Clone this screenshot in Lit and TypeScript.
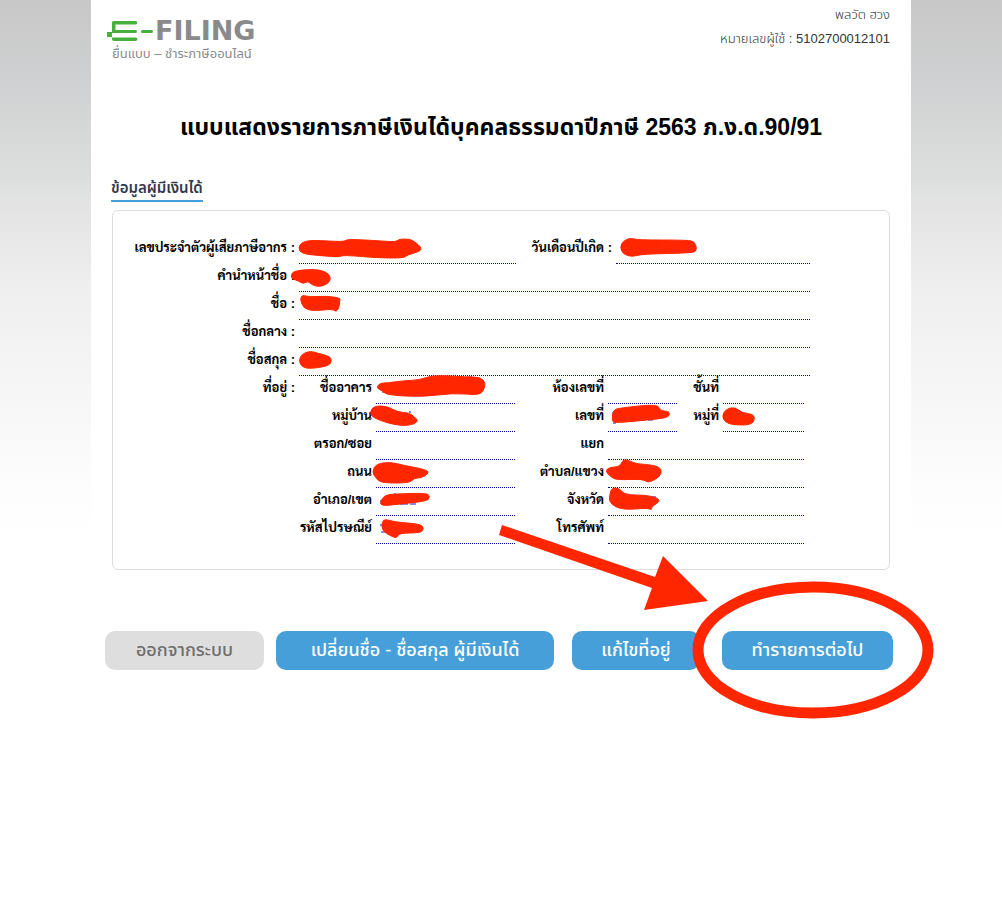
import { LitElement, html, svg, css, nothing } from "lit";
import { customElement } from "lit/decorators.js";

interface Field {
  id: string;
  label: string;
  area: string;
}

const personal: Field[][] = [
  [
    { id: "tax-id", label: "เลขประจำตัวผู้เสียภาษีอากร :", area: "short" },
    { id: "birth", label: "วันเดือนปีเกิด :", area: "short" },
  ],
  [{ id: "title", label: "คำนำหน้าชื่อ :", area: "full" }],
  [{ id: "first", label: "ชื่อ :", area: "full" }],
  [{ id: "middle", label: "ชื่อกลาง :", area: "full" }],
  [{ id: "last", label: "ชื่อสกุล :", area: "full" }],
];

const address: Field[][] = [
  [
    { id: "building", label: "ชื่ออาคาร", area: "short" },
    { id: "room", label: "ห้องเลขที่", area: "short" },
    { id: "floor", label: "ชั้นที่", area: "short" },
  ],
  [
    { id: "village", label: "หมู่บ้าน", area: "short" },
    { id: "house", label: "เลขที่", area: "short" },
    { id: "moo", label: "หมู่ที่", area: "short" },
  ],
  [
    { id: "soi", label: "ตรอก/ซอย", area: "short" },
    { id: "junction", label: "แยก", area: "rest" },
  ],
  [
    { id: "road", label: "ถนน", area: "short" },
    { id: "tambon", label: "ตำบล/แขวง", area: "rest" },
  ],
  [
    { id: "amphoe", label: "อำเภอ/เขต", area: "short" },
    { id: "province", label: "จังหวัด", area: "rest" },
  ],
  [
    { id: "postcode", label: "รหัสไปรษณีย์", area: "short" },
    { id: "phone", label: "โทรศัพท์", area: "rest" },
  ],
];

// Outlines of the brush strokes that hide the personal data.
const strokes: string[] = [
  "298 248 302 242 313 240 344 242 347 239 383 241 396 242 399 239 410 239 415 242 421 247 421 251 407 255 404 258 380 258 343 255 340 257 325 256 302 254",
  "291 275 294 271 312 269 325 271 331 277 329 283 320 287 312 285 308 281 303 284 299 281 292 279",
  "300 298 303 295 309 297 327 296 340 298 340 300 339 308 336 312 333 309 313 311 303 308",
  "299 360 302 354 310 351 317 353 329 356 332 360 329 366 308 369 301 366",
  "620 247 624 240 632 238 637 240 688 240 695 242 697 250 693 253 642 254 632 257 623 254",
  "376 388 380 383 388 383 400 381 420 380 433 375 467 377 480 377 486 383 483 392 477 395 453 393 423 397 387 395 383 391",
  "370 412 374 406 387 406 397 412 410 413 414 417 418 420 415 424 403 426 387 423 372 417",
  "372 472 376 464 390 462 402 465 428 470 428 474 421 478 414 478 410 483 381 483 376 478",
  "380 502 385 495 395 494 426 493 430 496 428 501 400 504 382 506",
  "382 522 385 519 395 522 420 524 424 528 421 533 399 533 397 538 393 537 382 531",
  "612 420 613 410 620 408 658 404 660 411 668 411 670 414 667 418 637 421 614 423",
  "722 416 726 409 735 407 742 413 753 414 755 419 751 425 733 425 725 422",
  "605 471 610 467 620 467 623 459 630 461 637 464 654 465 662 469 660 477 648 483 643 479 617 480 611 477",
  "610 493 612 488 619 488 625 495 648 495 662 500 651 507 652 510 647 508 622 510 609 503",
];

function blob(points: string): string {
  const n = points.split(" ").map(Number);
  const p: [number, number][] = [];
  for (let i = 0; i < n.length; i += 2) p.push([n[i], n[i + 1]]);
  const mid = (a: [number, number], b: [number, number]) =>
    `${(a[0] + b[0]) / 2} ${(a[1] + b[1]) / 2}`;
  let d = `M${mid(p[p.length - 1], p[0])}`;
  p.forEach((q, i) => {
    d += `Q${q[0]} ${q[1]} ${mid(q, p[(i + 1) % p.length])}`;
  });
  return d + "Z";
}

@customElement("app-root")
class AppRoot extends LitElement {
  static styles = css`
    :host {
      display: block;
      min-height: 100vh;
      background: linear-gradient(
        #c8c8c8 0,
        #cfd0d1 80px,
        #dddfde 180px,
        #e4e4e4 210px,
        #efefef 290px,
        #f6f6f6 390px,
        #fdfdfd 490px,
        #ffffff 540px
      );
      color: #000;
      font-family: "Liberation Sans", "Noto Sans Thai", sans-serif;
    }
    * {
      box-sizing: border-box;
    }
    .page {
      position: relative;
      max-width: 820px;
      min-height: 100vh;
      margin: 0 auto;
      padding: 0 21px;
      background: #fff;
    }
    .top {
      display: flex;
      justify-content: space-between;
      height: 72px;
    }
    .brand {
      display: flex;
      flex-direction: column;
      gap: 2px;
      padding-top: 19px;
      color: #8a8a8c;
    }
    .name {
      display: flex;
      align-items: center;
      gap: 1px;
      height: 24px;
      margin-left: -5px;
      font: 700 27px/24px "DejaVu Sans", sans-serif;
    }
    .tagline {
      font-size: 13px;
      line-height: 18px;
    }
    .user {
      padding-top: 3px;
      text-align: right;
      font-size: 13px;
      font-weight: 300;
      line-height: 24px;
      color: #333;
    }
    h1 {
      margin: 39px 0 0;
      text-align: center;
      font-size: 23px;
      line-height: 32px;
      font-weight: 700;
    }
    h2 {
      width: fit-content;
      margin: 33px 0 8px -1px;
      border-bottom: 2px solid #469fd8;
      font-size: 15px;
      line-height: 24px;
      font-weight: 600;
      color: #33384a;
      white-space: nowrap;
    }
    .panel {
      padding: 25px 79px 25px 0;
      border: 1px solid #ddd;
      border-radius: 6px;
      font: 700 13px/24px "Liberation Sans", "Sarabun", "Loma", sans-serif;
    }
    .row {
      display: grid;
      column-gap: 4px;
      height: 28px;
      grid-template-columns: 182px 217fr 92px 194fr;
    }
    .row.addr {
      padding-right: 6px;
      grid-template-columns: 182px 73px 139fr 85px 69fr 38px 81fr;
    }
    .row label,
    .lead {
      text-align: right;
      white-space: nowrap;
    }
    .row input {
      width: 100%;
      min-width: 0;
      height: 28px;
      padding: 0 4px;
      border: 0;
      border-bottom: 1px dotted #0000a0;
      outline: 0;
      background: transparent;
      color: #0000a0;
      font: inherit;
    }
    .row .full {
      grid-column: 2 / -1;
    }
    .row .rest {
      grid-column: 5 / -1;
    }
    .actions,
    .pair {
      display: flex;
    }
    .actions {
      gap: 18px;
      margin: 61px -4px 0 -7px;
    }
    .pair.near {
      gap: 12px;
    }
    .pair.far {
      gap: 22px;
    }
    button {
      height: 39px;
      padding: 0;
      border: 0;
      border-radius: 10px;
      background: #469fd8;
      color: #fff;
      font: 500 18px/39px "Liberation Sans", "Noto Sans Thai", sans-serif;
      white-space: nowrap;
    }
    .w-s {
      width: 128px;
    }
    .w-m {
      width: 159px;
    }
    .w-l {
      width: 171px;
    }
    .w-xl {
      width: 278px;
    }
    .muted {
      background: #dedede;
      color: #6e6e6e;
    }
    .marks {
      position: absolute;
      top: 0;
      left: -91px;
      pointer-events: none;
    }
  `;

  private field(f: Field) {
    return html`<label for=${f.id}>${f.label}</label
      ><input id=${f.id} class=${f.area} type="text" readonly />`;
  }

  render() {
    return html`
      <main class="page">
        <header class="top">
          <div class="brand">
            <div class="name">
              <svg width="47" height="20" viewBox="0 0 47 20" fill="#45b03c" aria-hidden="true">
                <path d="M6.5 0H28.500a1.750 1.750 0 0 1 0 3.500H8.500V9H28.500a1.500 1.500 0 0 1 0 3H5V1.500Q5 0 6.500 0Z" />
                <path d="M0 11H5V16H0Z" />
                <path d="M5 16.500H28.500a1.750 1.750 0 0 1 0 3.500H7Q5 20 5 18Z" />
                <rect x="34" y="9" width="12" height="3" rx="1.5" />
              </svg>
              FILING
            </div>
            <div class="tagline">ยื่นแบบ – ชำระภาษีออนไลน์</div>
          </div>
          <div class="user">
            <div>พลวัต ฮวง</div>
            <div>หมายเลขผู้ใช้ : 5102700012101</div>
          </div>
        </header>

        <h1>แบบแสดงรายการภาษีเงินได้บุคคลธรรมดาปีภาษี 2563 ภ.ง.ด.90/91</h1>
        <h2>ข้อมูลผู้มีเงินได้</h2>

        <section class="panel">
          ${personal.map((r) => html`<div class="row">${r.map((f) => this.field(f))}</div>`)}
          ${address.map(
            (r, i) => html`<div class="row addr">
              <span class="lead">${i === 0 ? "ที่อยู่ :" : nothing}</span>
              ${r.map((f) => this.field(f))}
            </div>`
          )}
        </section>

        <div class="actions">
          <div class="pair near">
            <button class="w-m muted" type="button">ออกจากระบบ</button>
            <button class="w-xl" type="button">เปลี่ยนชื่อ - ชื่อสกุล ผู้มีเงินได้</button>
          </div>
          <div class="pair far">
            <button class="w-s" type="button">แก้ไขที่อยู่</button>
            <button class="w-l" type="button">ทำรายการต่อไป</button>
          </div>
        </div>

        <svg class="marks" width="1002" height="740" viewBox="0 0 1002 740" aria-hidden="true">
          <path
            d="M382 392h4M468 377h4M409 412h2M381 500v4M386 504h6M394 504h4M400 504h8M410 504h6M395 493v2M381 524v2M381 532h4M402 532h4M410 532h4M613 412v2M613 423h3M641 420h4M648 420h5M651 497h5"
            fill="none"
            stroke="#1717c8"
          />
          <g fill="#ff2600" stroke="#ff2600" stroke-linejoin="round">
            ${strokes.map((s) => svg`<path d=${blob(s)} />`)}
          </g>
          <path d="M502 525 655 577 663 556 708 601 644 610 652 588 499 535Z" fill="#ff2600" />
          <ellipse cx="813" cy="650" rx="115" ry="63" fill="none" stroke="#ff2600" stroke-width="11" />
        </svg>
      </main>
    `;
  }
}
